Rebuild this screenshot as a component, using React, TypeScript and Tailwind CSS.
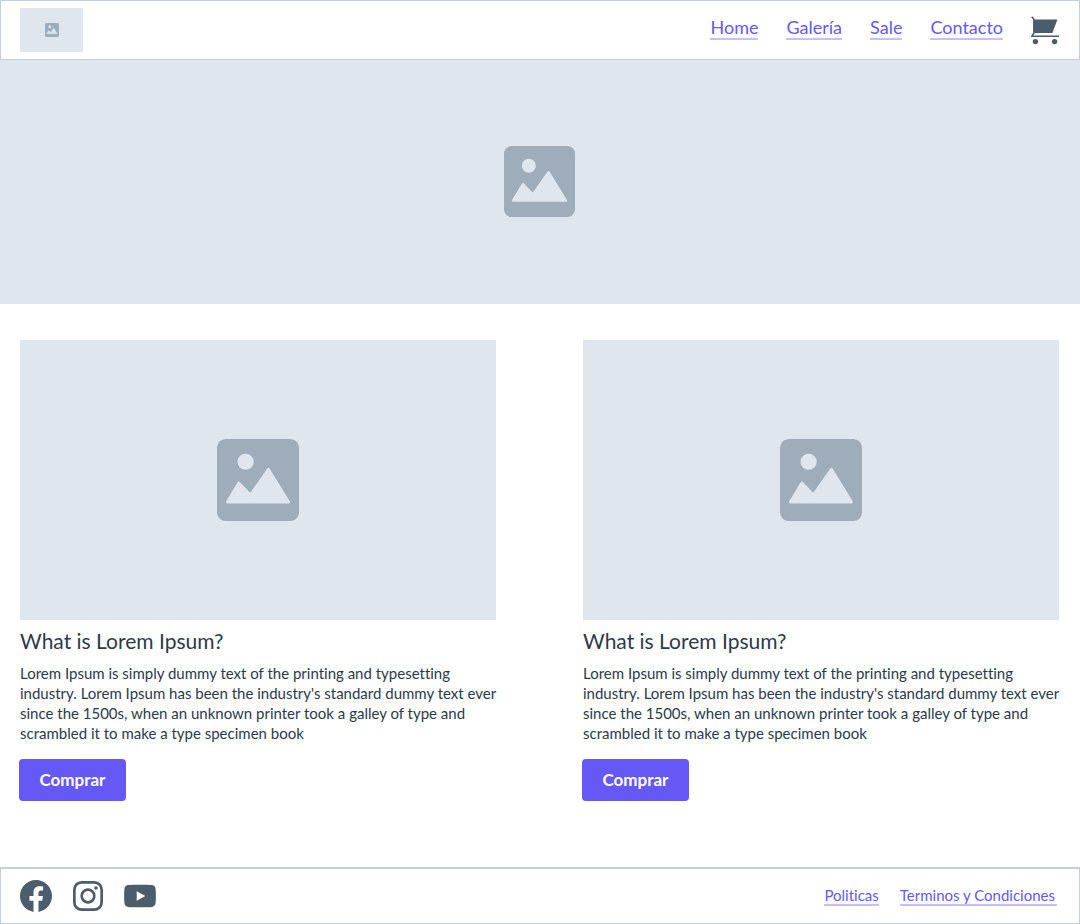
import React from "react";

function PictureIcon({ className }: { className: string }) {
  return (
    <svg viewBox="0 0 71 71" className={className} aria-hidden="true">
      <rect width="71" height="71" rx="7.5" fill="#9eadb9" />
      <circle cx="24.8" cy="19.7" r="7" fill="#dfe6ee" />
      <path
        d="M9 54.6 18.9 38l10 10.5L44.5 26.2 62 54.6Z"
        fill="#dfe6ee"
        stroke="#dfe6ee"
        strokeWidth="2.4"
        strokeLinejoin="round"
      />
    </svg>
  );
}

function CartIcon() {
  return (
    <svg viewBox="0 0 28 29" className="h-[29px] w-7" fill="#4b5c6b" aria-hidden="true">
      <path d="M2.9 3.6H26.4L21.4 16.9H3.9L2.9 16.2Z" />
      <path
        d="M.7.8 2.9 3.2V17L.9 20.3H28"
        fill="none"
        stroke="#4b5c6b"
        strokeWidth="1.6"
      />
      <circle cx="4.4" cy="25.6" r="2.7" />
      <circle cx="23.6" cy="25.6" r="2.7" />
    </svg>
  );
}

function FacebookIcon() {
  return (
    <svg viewBox="0 0 24 24" className="size-8" fill="#4b5c6b" aria-hidden="true">
      <path d="M24 12.073c0-6.627-5.373-12-12-12s-12 5.373-12 12c0 5.99 4.388 10.954 10.125 11.854v-8.385H7.078v-3.47h3.047V9.43c0-3.007 1.792-4.669 4.533-4.669 1.312 0 2.686.235 2.686.235v2.953H15.83c-1.491 0-1.956.925-1.956 1.874v2.25h3.328l-.532 3.47h-2.796v8.385C19.612 23.027 24 18.062 24 12.073z" />
    </svg>
  );
}

function InstagramIcon() {
  return (
    <svg viewBox="0 0 30 30" className="size-[30px]" fill="none" stroke="#4b5c6b" aria-hidden="true">
      <rect x="1.35" y="1.35" width="27.3" height="27.3" rx="7.3" strokeWidth="2.7" />
      <circle cx="15" cy="15" r="6.3" strokeWidth="2.7" />
      <circle cx="23" cy="7" r="1.8" fill="#4b5c6b" stroke="none" />
    </svg>
  );
}

function YoutubeIcon() {
  return (
    <svg viewBox="0 0 32 24" className="h-6 w-8" aria-hidden="true">
      <path
        d="M4 1.1C8 .5 24 .5 28 1.1 30.6 1.5 31.4 3 31.6 5.2 32 9.5 32 14.5 31.6 18.8 31.4 21 30.6 22.5 28 22.9 24 23.5 8 23.5 4 22.9 1.4 22.5.6 21 .4 18.8 0 14.5 0 9.5.4 5.2.6 3 1.4 1.5 4 1.1Z"
        fill="#4b5c6b"
      />
      <path d="M12.7 7.3V16.7L21.4 12Z" fill="#fff" />
    </svg>
  );
}

const navItems = ["Home", "Galería", "Sale", "Contacto"];
const products = [1, 2];

function Product() {
  return (
    <article className="flex flex-col items-start">
      <div className="flex aspect-[476/280] w-full items-center justify-center bg-[#dfe6ee]">
        <PictureIcon className="size-[82px]" />
      </div>
      <h2 className="mt-[7px] text-[21px] leading-7 text-[#2c3a48]">What is Lorem Ipsum?</h2>
      <p className="mt-2 text-[15px] leading-5 text-[#2c3a48]">
        Lorem Ipsum is simply dummy text of the printing and typesetting industry. Lorem Ipsum has
        been the industry's standard dummy text ever since the 1500s, when an unknown printer took a
        galley of type and scrambled it to make a type specimen book
      </p>
      <button
        type="button"
        className="-ml-px mt-4 h-[42px] min-w-[107px] rounded bg-[#6558f5] px-4 text-[17px] font-bold text-white"
      >
        Comprar
      </button>
    </article>
  );
}

export default function App() {
  return (
    <div className="flex min-h-screen flex-col bg-white font-['Lato',sans-serif] [font-variant-ligatures:none]">
      <header className="flex h-[60px] items-center justify-between border border-[#c2ced9] pl-[19px] pr-5">
        <a
          href="#"
          aria-label="Logo"
          className="flex h-11 w-[63px] items-center justify-center bg-[#dfe6ee]"
        >
          <PictureIcon className="size-3.5" />
        </a>
        <div className="flex items-center gap-7">
          <nav className="flex gap-7 pb-0.5">
            {navItems.map((item) => (
              <a
                key={item}
                href="#"
                className="border-b-2 border-[#c5bffd] pb-0.5 text-[18px] leading-[18px] text-[#6558f5]"
              >
                {item}
              </a>
            ))}
          </nav>
          <button type="button" aria-label="Carrito">
            <CartIcon />
          </button>
        </div>
      </header>

      <main className="flex-1">
        <section className="flex h-[244px] items-center justify-center bg-[#dfe6ee] pb-0.5 pr-0.5">
          <PictureIcon className="size-[71px]" />
        </section>
        <section className="grid grid-cols-2 gap-x-[87px] py-9 pl-5 pr-[21px]">
          {products.map((id) => (
            <Product key={id} />
          ))}
        </section>
      </main>

      <footer className="flex h-[57px] items-center justify-between border border-t-2 border-[#c2ced9] pl-[19px] pr-[22px]">
        <div className="flex items-center gap-[21px]">
          <a href="#" aria-label="Facebook">
            <FacebookIcon />
          </a>
          <a href="#" aria-label="Instagram">
            <InstagramIcon />
          </a>
          <a href="#" aria-label="YouTube">
            <YoutubeIcon />
          </a>
        </div>
        <nav className="flex gap-[21px]">
          <a
            href="#"
            className="border-b-2 border-[#c5bffd] text-[15px] leading-[18px] text-[#6558f5]"
          >
            Politicas
          </a>
          <a
            href="#"
            className="border-b-2 border-[#c5bffd] pr-0.5 text-[15px] leading-[18px] text-[#6558f5]"
          >
            Terminos y Condiciones
          </a>
        </nav>
      </footer>
    </div>
  );
}
